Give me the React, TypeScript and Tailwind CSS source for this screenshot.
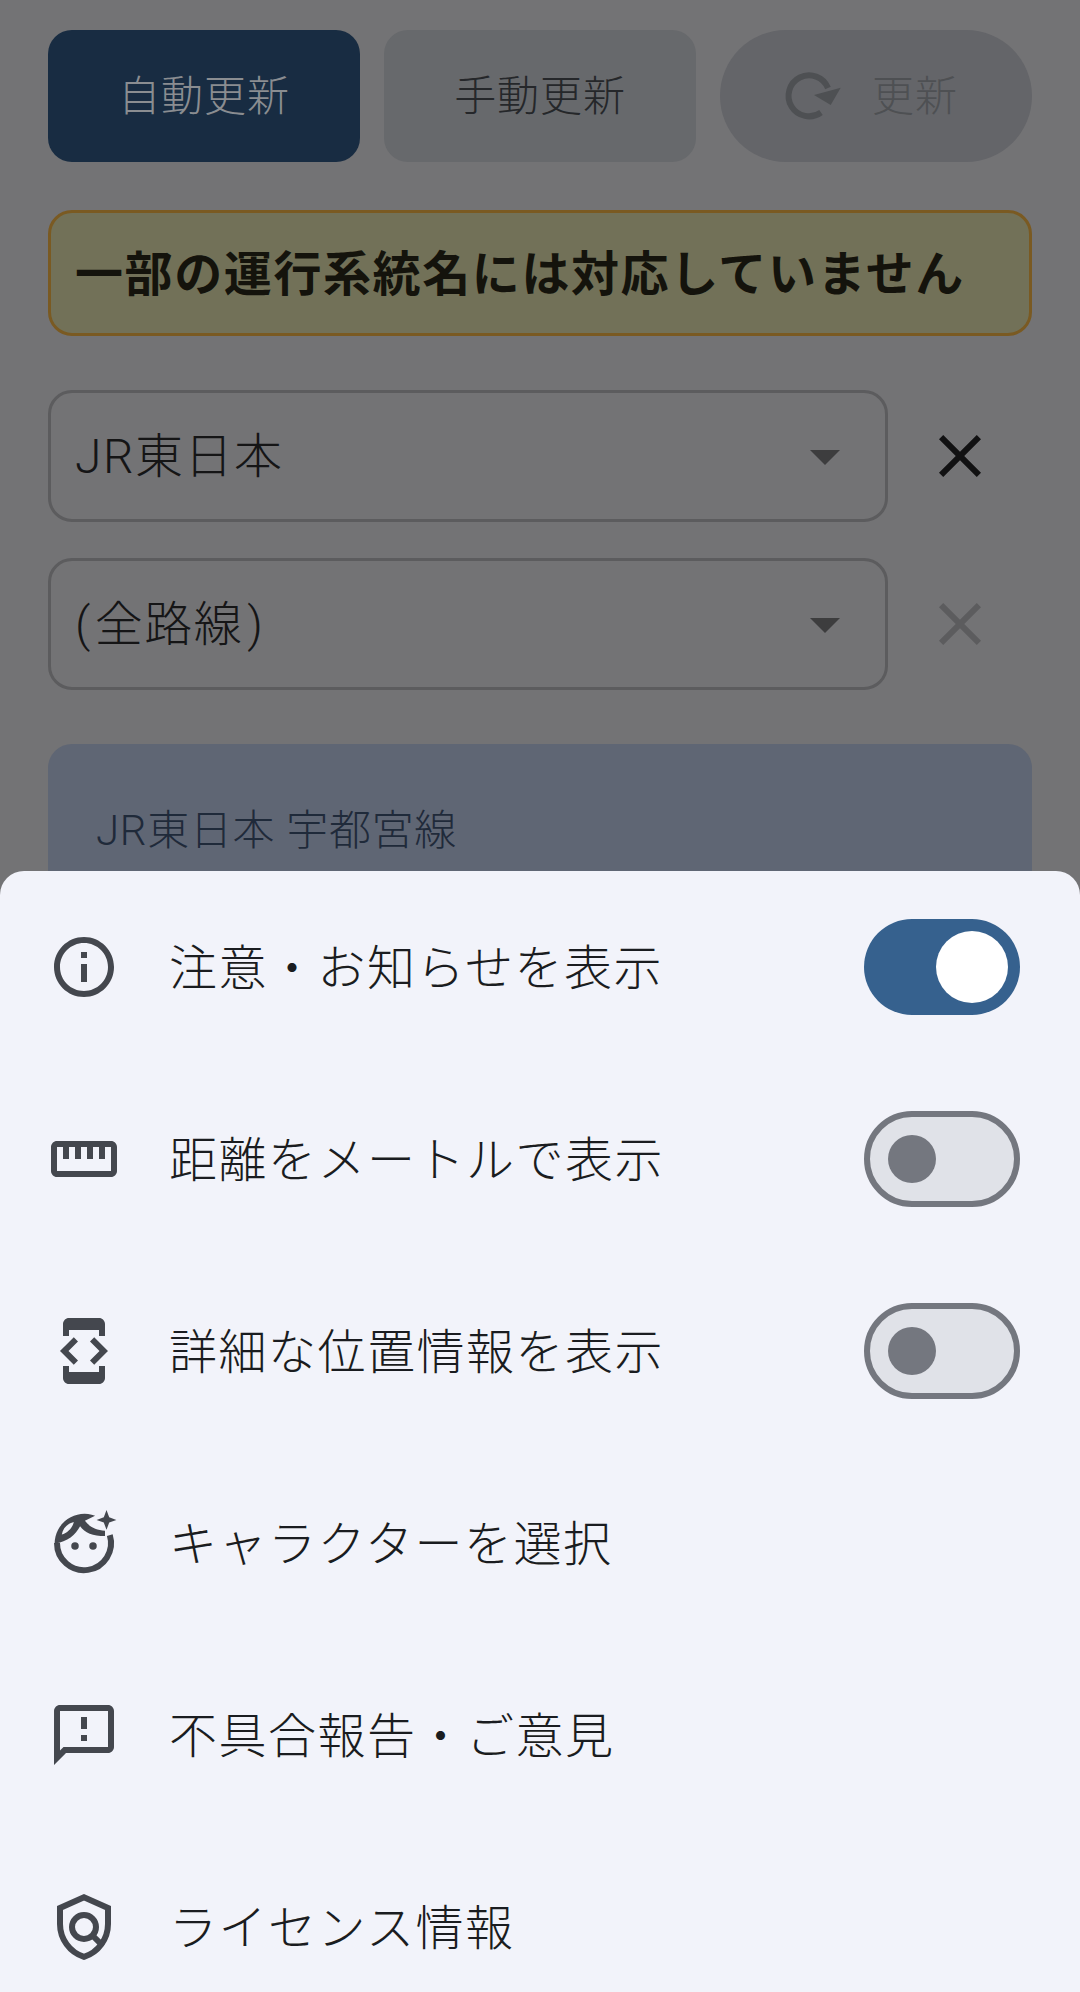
const Ic = ({ d, className }: { d: string; className: string }) => (
  <svg viewBox="0 0 24 24" className={className} fill="currentColor">
    <path d={d} />
  </svg>
);

const icons = {
  info: "M11 7h2v2h-2zm0 4h2v6h-2zm1-9C6.48 2 2 6.48 2 12s4.48 10 10 10 10-4.48 10-10S17.52 2 12 2zm0 18c-4.41 0-8-3.59-8-8s3.59-8 8-8 8 3.59 8 8-3.59 8-8 8z",
  ruler: "M21 6H3c-1.1 0-2 .9-2 2v8c0 1.1.9 2 2 2h18c1.1 0 2-.9 2-2V8c0-1.1-.9-2-2-2zm0 10H3V8h2v4h2V8h2v4h2V8h2v4h2V8h2v4h2V8h2v8z",
  dev: "M7 1h10c1.1 0 2 .9 2 2v4h-2V5H7v2H5V3c0-1.1.9-2 2-2zm8.41 15.59L20 12l-4.59-4.59L14 8.83 17.17 12 14 15.17l1.41 1.42zM10 15.17L6.83 12 10 8.83 8.59 7.41 4 12l4.59 4.59L10 15.17zM5 17h2v2h10v-2h2v4c0 1.1-.9 2-2 2H7c-1.1 0-2-.9-2-2v-4z",
  feedback: "M20 2H4c-1.1 0-1.99.9-1.99 2L2 22l4-4h14c1.1 0 2-.9 2-2V4c0-1.1-.9-2-2-2zm0 14H5.17L4 17.17V4h16v12zm-9-4h2v2h-2zm0-6h2v4h-2z",
  close: "M19 6.41 17.59 5 12 10.59 6.41 5 5 6.41 10.59 12 5 17.59 6.41 19 12 13.41 17.59 19 19 17.59 13.41 12z",
  drop: "M7 10l5 5 5-5z",
};

function RefreshIcon() {
  return (
    <svg viewBox="0 0 72 72" className="w-[72px] h-[72px]" fill="none" stroke="currentColor" strokeWidth="6">
      <path d="M49 52.5A20.5 20.5 0 1 1 56 28" />
      <path d="M42 35L68.7 27.7L58.7 45Z" fill="currentColor" stroke="none" />
    </svg>
  );
}

function FaceIcon() {
  return (
    <svg viewBox="0 0 24 24" className="w-[72px] h-[72px] text-[#44474e]" fill="none" stroke="currentColor" strokeWidth="2">
      <path d="M20.6 9.4A9 9 0 1 1 3 12" />
      <path
        fillRule="evenodd"
        d="M2.2 12.2C6.6 11.6 9.2 9.2 10.7 6.4C12.2 8.6 15 9.7 19 9.7L19 7.9C16 7.8 13.8 6.6 12.3 4.6L15.7 2.9A10 10 0 0 0 2.2 12.2ZM4.6 9.2C5 7 6.5 5.5 8.6 5C8.2 7 6.5 8.6 4.6 9.2Z"
        fill="currentColor"
        stroke="none"
      />
      <circle cx="9" cy="13" r="1.25" fill="currentColor" stroke="none" />
      <circle cx="15" cy="13" r="1.25" fill="currentColor" stroke="none" />
      <path d="M19.5 1l.9 2.4 2.4.9-2.4.9-.9 2.4-.9-2.4-2.4-.9 2.4-.9z" fill="currentColor" stroke="none" />
    </svg>
  );
}

function ShieldIcon() {
  return (
    <svg viewBox="0 0 24 24" className="w-[72px] h-[72px] text-[#44474e]" fill="none" stroke="currentColor" strokeWidth="2">
      <path d="M12 2.1 4 5.65V11c0 4.9 3.2 9.5 8 10.95 4.8-1.45 8-6.05 8-10.95V5.65z" />
      <circle cx="12" cy="12" r="4" />
      <path d="M15 15l3.3 3.3" />
    </svg>
  );
}

function Toggle({ on }: { on: boolean }) {
  if (on) {
    return (
      <div className="w-[156px] h-[96px] rounded-full bg-[#36618e] flex items-center justify-end pr-[12px]">
        <div className="w-[72px] h-[72px] rounded-full bg-white" />
      </div>
    );
  }
  return (
    <div className="w-[156px] h-[96px] rounded-full bg-[#e0e2e8] border-[6px] border-[#74777f] flex items-center pl-[18px]">
      <div className="w-[48px] h-[48px] rounded-full bg-[#74777f]" />
    </div>
  );
}

function Select({ label, clearColor }: { label: React.ReactNode; clearColor: string }) {
  return (
    <div className="flex items-center">
      <div className="w-[840px] h-[132px] rounded-[24px] border-[3px] border-[#5c5c5e] flex items-center justify-between pl-[24px] pr-[24px]">
        <span className="pt-[2px] text-[48px] font-light tracking-[1.5px] leading-none text-[#151516]">{label}</span>
        <Ic d={icons.drop} className="w-[72px] h-[72px] text-[#3d3d3e]" />
      </div>
      <Ic d={icons.close} className={`w-[72px] h-[72px] ml-[36px] ${clearColor}`} />
    </div>
  );
}

function Row({ icon, label, toggle }: { icon: React.ReactNode; label: string; toggle?: boolean }) {
  return (
    <div className="h-[192px] shrink-0 flex items-center pl-[48px] pr-[60px]">
      {icon}
      <span className="ml-[49px] pt-[4px] flex-1 text-[48px] font-light tracking-[1.5px] leading-none text-[#1a1c20]">{label}</span>
      {toggle !== undefined && <Toggle on={toggle} />}
    </div>
  );
}

const sheetIcon = "w-[72px] h-[72px] text-[#44474e]";

export default function App() {
  return (
    <div className="w-[1080px] h-[1992px] overflow-hidden bg-[#737375] flex flex-col font-['Roboto','Noto_Sans_CJK_JP',sans-serif]">
      <div className="h-[871px] shrink-0 overflow-hidden px-[48px] pt-[30px]">
        <div className="flex gap-[24px]">
          <div className="w-[312px] h-[132px] pt-[1px] rounded-[24px] bg-[#182c42] flex items-center justify-center text-[42px] font-light tracking-[.9px] text-[#8a8d91]">自動更新</div>
          <div className="w-[312px] h-[132px] pt-[1px] rounded-[24px] bg-[#67696c] flex items-center justify-center text-[42px] font-light tracking-[.9px] text-[#25272a]">手動更新</div>
          <div className="w-[312px] h-[132px] rounded-full bg-[#646569] flex items-center justify-center gap-[28px] pr-[22px] text-[42px] font-light tracking-[.9px] text-[#4e5053]">
            <RefreshIcon />
            <span className="pt-[1px]">更新</span>
          </div>
        </div>
        <div className="mt-[48px] h-[126px] pt-[4px] rounded-[24px] border-[3px] border-[#7a5a22] bg-[#727158] flex items-center pl-[24px] text-[48px] font-bold tracking-[1.6px] text-[#14130c]">
          一部の運行系統名には対応していません
        </div>
        <div className="mt-[54px] flex flex-col gap-[36px]">
          <Select label="JR東日本" clearColor="text-[#111112]" />
          <Select
            label={
              <>
                <span className="mr-[3px]">(</span>全路線<span className="ml-[4px]">)</span>
              </>
            }
            clearColor="text-[#5c5c5e]"
          />
        </div>
        <div className="mt-[54px] h-[300px] rounded-[24px] bg-[#5f6674] px-[48px] pt-[66px] text-[42px] font-light tracking-[.7px] leading-none text-[#1f2a3a]">
          JR東日本 宇都宮線
        </div>
      </div>
      <div className="flex-1 min-h-0 rounded-t-[24px] bg-[#f2f3fa] flex flex-col">
        <Row icon={<Ic d={icons.info} className={sheetIcon} />} label="注意・お知らせを表示" toggle={true} />
        <Row icon={<Ic d={icons.ruler} className={sheetIcon} />} label="距離をメートルで表示" toggle={false} />
        <Row icon={<Ic d={icons.dev} className={sheetIcon} />} label="詳細な位置情報を表示" toggle={false} />
        <Row icon={<FaceIcon />} label="キャラクターを選択" />
        <Row icon={<Ic d={icons.feedback} className={sheetIcon} />} label="不具合報告・ご意見" />
        <Row icon={<ShieldIcon />} label="ライセンス情報" />
      </div>
    </div>
  );
}
